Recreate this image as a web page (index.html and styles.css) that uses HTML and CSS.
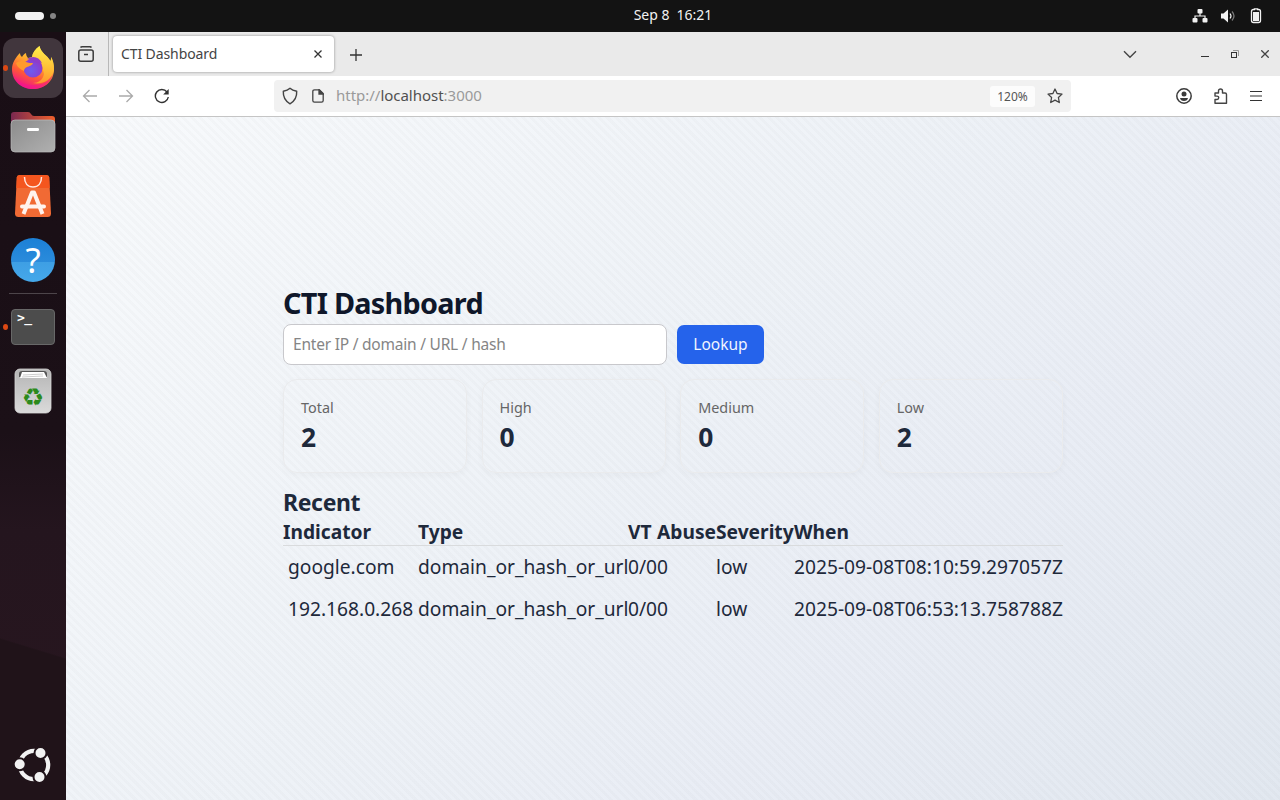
FILE: index.html
```html
<!DOCTYPE html>
<html lang="en">
<head>
<meta charset="utf-8">
<title>CTI Dashboard</title>
<link rel="stylesheet" href="styles.css">
</head>
<body>
<header class="topbar">
  <div class="workspaces"><span class="pill"></span><span class="dot"></span></div>
  <div class="clock"><span>Sep 8</span><span>16:21</span></div>
  <div class="tray">
    <svg width="16" height="16" viewBox="0 0 16 16" fill="#f2f2f2"><rect x="5.500" y="1" width="5" height="4.500" rx="1"/><rect x="0.500" y="10" width="5" height="4.500" rx="1"/><rect x="10.500" y="10" width="5" height="4.500" rx="1"/><path d="M8 5v3M3 10V8h10v2" fill="none" stroke="#f2f2f2" stroke-width="1.200"/></svg>
    <svg width="16" height="16" viewBox="0 0 16 16"><path d="M1 5.500h2.500L8 1.500v13L3.500 10.500H1z" fill="#f2f2f2"/><path d="M10 5.500q2 2.500 0 5" fill="none" stroke="#f2f2f2" stroke-width="1.200"/><path d="M12 3.500q4 4.500 0 9" fill="none" stroke="#777" stroke-width="1.300"/></svg>
    <svg width="16" height="16" viewBox="0 0 16 16"><path d="M5.500 1.500h1V.8h3v.7h1q2 0 2 2v9q0 2-2 2h-5q-2 0-2-2v-9q0-2 2-2z" fill="none" stroke="#f2f2f2" stroke-width="1.300"/><rect x="5" y="4" width="6" height="9" fill="#f2f2f2"/></svg>
  </div>
</header>
<div class="desktop">
  <nav class="dock">
    <div class="tile active running">
      <svg width="44" height="46" viewBox="0 0 44 46">
        <defs>
          <linearGradient id="fx" x1=".8" y1="0" x2=".35" y2="1"><stop offset="0" stop-color="#fff24a"/><stop offset=".4" stop-color="#ffb02e"/><stop offset=".7" stop-color="#ff5a36"/><stop offset="1" stop-color="#f0108c"/></linearGradient>
          <linearGradient id="fy" x1="0" y1="0" x2="0" y2="1"><stop offset="0" stop-color="#fff04d"/><stop offset="1" stop-color="#ffa22a"/></linearGradient>
          <radialGradient id="fp" cx=".4" cy=".65" r=".65"><stop offset="0" stop-color="#6c5cf0"/><stop offset="1" stop-color="#9238c8"/></radialGradient>
        </defs>
        <path d="M9 8C5 12 1 18 1 24c0 12 9 20 21 20s21-8 21-20c0-5-1-9-3-12 0 2 0 3-.5 4C36 10 30 8 28.500 1 24 4 21.500 8 21 12l-4 1c-1-1-2-3-2-5-2 1-3 2-4 4-1-1-2-2-2-4z" fill="url(#fx)"/>
        <path d="M28.500 1C24 4 21.500 8 21 12c5 0 9 3 10 8l2 9c-1 6-6 9-11 9 9 2 19-3 21-13 0-5-1-9-3-13 0 2 0 3-.5 4C36 10 30 8 28.500 1z" fill="url(#fy)" opacity=".85"/>
        <circle cx="22" cy="23" r="9.500" fill="url(#fp)"/>
        <path d="M16 14c6-4 12-2 15 4-3-1-5 0-5 0-2-2-6-3-10-4z" fill="#8f3dc8"/>
        <path d="M5 18c5-3 8-2 10-1 2 1 5 1 7 1-1 3-4 3-6 4-2 1-3 2-3 4-4-2-7-4-8-8z" fill="#ff9a2c"/>
        <path d="M2 29c4 8 11 11 20 11s16-3 20-11c-3 10-11 15-20 15S5 39 2 29z" fill="#f4158c" opacity=".6"/>
      </svg>
    </div>
    <div class="tile">
      <svg width="46" height="42" viewBox="0 0 46 42"><defs><linearGradient id="fo" x1="0" x2="1"><stop offset="0" stop-color="#7a2850"/><stop offset="1" stop-color="#f0602c"/></linearGradient><linearGradient id="fg" x1="0" y1="0" x2="1" y2="1"><stop stop-color="#8c8c8c"/><stop offset="1" stop-color="#b0b0b0"/></linearGradient></defs><path d="M1 12V4q0-3 3-3h14q2 0 3 2t3 2h18q3 0 3 3v6z" fill="url(#fo)"/><rect x="1" y="9" width="44" height="32" rx="4" fill="url(#fg)" stroke="#bbb" stroke-width=".7"/><rect x="17" y="17" width="12" height="3" rx="1.200" fill="#fff"/></svg>
    </div>
    <div class="tile">
      <svg width="36" height="42" viewBox="0 0 36 42"><path d="M4.500 0h27q2.500 0 2.700 2.500L36 38.500q0 3.500-3.500 3.500h-29Q0 42 0 38.500L1.800 2.500Q2 0 4.500 0z" fill="#f16a34"/><path d="M4.500 0h27q2.500 0 2.700 2.500l.5 10.500H1.300l.5-10.500Q2 0 4.500 0z" fill="#f4561f"/><path d="M9.500 2c0 6 3 10 8.500 10s8.500-4 8.500-10" fill="none" stroke="#ffe8df" stroke-width="1.500"/><path d="M8.500 39L17 17.500h2L27.500 39" fill="none" stroke="#fff3ee" stroke-width="4" stroke-linejoin="round"/><path d="M7 31.500h22" stroke="#fff3ee" stroke-width="4" stroke-linecap="round"/></svg>
    </div>
    <div class="tile"><div class="help">?</div></div>
    <div class="divider"></div>
    <div class="tile running"><div class="terminal">&gt;_</div></div>
    <div class="tile">
      <svg width="38" height="46" viewBox="0 0 38 46"><defs><linearGradient id="tr" x1="0" y1="0" x2="0" y2="1"><stop stop-color="#b5b5b5"/><stop offset="1" stop-color="#dadada"/></linearGradient></defs><rect x="1" y="1" width="36" height="44" rx="5" fill="url(#tr)" stroke="#d8d8d8" stroke-width=".8"/><path d="M5 9V6q0-3 3-3h22q3 0 3 3v3" fill="#555"/><path d="M6 10l2-6h22l3 6z" fill="#fff"/><path d="M9 7l20-1M8 9l21-1" stroke="#aaa" stroke-width=".6"/><text x="19" y="38" class="recycle" text-anchor="middle">♻</text></svg>
    </div>
    <div class="tile launcher">
      <svg width="38" height="38" viewBox="0 0 38 38"><circle cx="20" cy="19" r="14.200" fill="none" stroke="#f2f2f2" stroke-width="4.200"/><g fill="#f2f2f2" stroke="#21141a" stroke-width="2"><circle cx="5.700" cy="18.300" r="6"/><circle cx="26.500" cy="7" r="6"/><circle cx="25.500" cy="31" r="6"/></g></svg>
    </div>
  </nav>
  <main class="browser">
    <div class="tabstrip">
      <div class="overview"><svg width="16" height="16" viewBox="0 0 16 16" fill="none" stroke="#3c3c3c" stroke-width="1.500"><path d="M2.500 1.500q.6-.7 1.500-.7h8q.9 0 1.500.7"/><rect x=".8" y="4" width="14.400" height="11.200" rx="2"/><path d="M6 8.500h4"/></svg></div>
      <div class="tab"><span class="tabname">CTI Dashboard</span><svg width="8" height="8" viewBox="0 0 8 8" stroke="#333" stroke-width="1.300"><path d="M.5.500l7 7M7.500.500l-7 7"/></svg></div>
      <svg class="plus" width="14" height="14" viewBox="0 0 14 14" stroke="#333" stroke-width="1.300"><path d="M7 1v12M1 7h12"/></svg>
      <div class="controls">
        <svg width="14" height="9" viewBox="0 0 14 9" fill="none" stroke="#444" stroke-width="1.400"><path d="M1 1.200l6 6 6-6"/></svg>
        <svg class="minimize" width="8" height="10" viewBox="0 0 8 10" stroke="#333"><path d="M0 7.500h8"/></svg>
        <svg class="restore" width="8" height="8" viewBox="0 0 8 8" fill="none"><path d="M2 .5h5.500V6" stroke="#999"/><rect x=".5" y="2.500" width="5" height="5" stroke="#333"/></svg>
        <svg width="8" height="8" viewBox="0 0 8 8" stroke="#444" stroke-width="1.300"><path d="M.3.300l7.400 7.400M7.700.300L.3 7.700"/></svg>
      </div>
    </div>
    <div class="toolbar">
      <div class="navigation">
        <svg width="16" height="16" viewBox="0 0 16 16" fill="none" stroke="#aaa" stroke-width="1.300"><path d="M15 8H1.500M7.500 2l-6 6 6 6"/></svg>
        <svg width="16" height="16" viewBox="0 0 16 16" fill="none" stroke="#aaa" stroke-width="1.300"><path d="M1 8h13.500M8.500 2l6 6-6 6"/></svg>
        <svg width="16" height="16" viewBox="0 0 16 16" fill="none" stroke="#333" stroke-width="1.400"><path d="M13 4A6.500 6.500 0 1 0 14.300 9"/><path d="M14.700 1v5.500H9.200z" fill="#333" stroke="none"/></svg>
      </div>
      <div class="address">
        <svg width="16" height="18" viewBox="0 0 16 18" fill="none" stroke="#444" stroke-width="1.400"><path d="M8 1.200C6 3 4 3.700 1.300 4.300 1 10 3 14 8 16.800c5-2.800 7-6.800 6.700-12.500C12 3.700 10 3 8 1.200z" stroke-linejoin="round"/></svg>
        <svg class="document" width="12" height="14" viewBox="0 0 12 14" fill="none" stroke="#444" stroke-width="1.300"><path d="M7.500.8H2.500Q.8.800.8 2.500v9q0 1.700 1.700 1.700h7q1.700 0 1.700-1.700V4.500z"/><path d="M7 .8v4.200h4.200z" fill="#444"/></svg>
        <div class="url">http://<span>localhost</span>:3000</div>
        <div class="zoom">120%</div>
        <svg width="16" height="16" viewBox="0 0 16 16" fill="none" stroke="#444" stroke-width="1.300" stroke-linejoin="round"><path d="M8 1l2.100 4.500 4.900.6-3.600 3.400.9 5L8 12.100l-4.300 2.400.9-5L1 6.100l4.900-.6z"/></svg>
      </div>
      <div class="actions">
        <svg width="16" height="16" viewBox="0 0 16 16"><circle cx="8" cy="8" r="7.200" fill="none" stroke="#3b3b3b" stroke-width="1.500"/><circle cx="8" cy="6" r="2.500" fill="#3b3b3b"/><path d="M4 10h8q-.5 3-4 3t-4-3z" fill="#3b3b3b"/></svg>
        <svg width="16" height="16" viewBox="0 0 16 16" fill="none" stroke="#444" stroke-width="1.400" stroke-linejoin="round"><path d="M2 5h3.500V3a2 2 0 0 1 4 0v2H12q1.500 0 1.500 1.500v8.800H2v-3.800h2a1.700 1.700 0 0 0 0-3.400H2z"/></svg>
        <svg class="menu" width="14" height="12" viewBox="0 0 14 12" stroke="#333" stroke-width="1.200"><path d="M1 1.500h12M1 6h12M1 10.500h12"/></svg>
      </div>
    </div>
    <section class="page">
      <div class="dashboard">
        <h1>CTI Dashboard</h1>
        <form class="lookup"><input type="text" placeholder="Enter IP / domain / URL / hash"><button type="button">Lookup</button></form>
        <div class="cards">
          <div class="card"><div class="label">Total</div><div class="value">2</div></div>
          <div class="card"><div class="label">High</div><div class="value">0</div></div>
          <div class="card"><div class="label">Medium</div><div class="value">0</div></div>
          <div class="card"><div class="label">Low</div><div class="value">2</div></div>
        </div>
        <h2>Recent</h2>
        <table>
          <colgroup><col class="c-indicator"><col class="c-type"><col class="c-vt"><col class="c-abuse"><col class="c-severity"><col></colgroup>
          <thead><tr><th>Indicator</th><th>Type</th><th>VT</th><th>Abuse</th><th>Severity</th><th>When</th></tr></thead>
          <tbody>
            <tr><td>google.com</td><td>domain_or_hash_or_url</td><td>0/0</td><td>0</td><td>low</td><td>2025-09-08T08:10:59.297057Z</td></tr>
            <tr><td>192.168.0.268</td><td>domain_or_hash_or_url</td><td>0/0</td><td>0</td><td>low</td><td>2025-09-08T06:53:13.758788Z</td></tr>
          </tbody>
        </table>
      </div>
    </section>
  </main>
</div>
</body>
</html>
```
FILE: styles.css
```css
* { box-sizing: border-box; }
body { margin: 0; width: 1280px; height: 800px; overflow: hidden; font-family: "Noto Sans", sans-serif; color: #1e293b; }
svg { display: block; flex: none; }
.topbar { height: 32px; background: #131313; color: #f2f2f2; display: grid; grid-template-columns: 1fr auto 1fr; align-items: center; }
.workspaces { display: flex; align-items: center; gap: 6px; padding-left: 15px; }
.pill { width: 29px; height: 8px; border-radius: 4px; background: #f2f2f2; }
.dot { width: 6px; height: 6px; border-radius: 50%; background: #858585; }
.clock { display: flex; gap: 7px; font-size: 14px; line-height: 30px; height: 32px; padding-left: 66px; }
.tray { display: flex; justify-content: flex-end; gap: 12px; padding-right: 16px; }
.desktop { display: flex; height: 768px; }
.dock { width: 66px; flex: none; padding: 6px 3px 5px; display: flex; flex-direction: column; gap: 4px; background: linear-gradient(197deg, transparent 79.4%, #201319 79.6%), linear-gradient(180deg, #190e15 0%, #1b1017 52%, #24151e 65%, #27161f 85%); }
.tile { width: 60px; height: 60px; flex: none; display: flex; align-items: center; justify-content: center; position: relative; }
.active { background: #41363d; border-radius: 12px; }
.running::before { content: ""; position: absolute; left: 0; top: 27px; width: 5px; height: 6px; border-radius: 50%; background: #dd4814; }
.help { width: 44px; height: 44px; border-radius: 50%; background: linear-gradient(#1c80d6 0, #2a8bdb 54%, #3e9fe4 55%, #45a8ea); color: #fff; font-size: 35px; line-height: 43px; text-align: center; }
.divider { width: 48px; height: 1px; margin: -1px 6px; background: #4d454a; }
.terminal { width: 44px; height: 36px; border: 1px solid #686868; border-radius: 4px; background: #4c4c4c; color: #fff; font: bold 13px/16px "DejaVu Sans Mono", monospace; padding: 0 0 0 5px; letter-spacing: -.5px; }
.recycle { font: 25px "DejaVu Sans", sans-serif; fill: #2c8a1b; }
.launcher { margin-top: auto; }
.browser { flex: 1; min-width: 0; display: flex; flex-direction: column; }
.tabstrip { height: 44px; background: #eaeaea; display: flex; align-items: center; }
.overview { width: 43px; height: 44px; display: flex; align-items: center; padding-left: 12px; border-right: 1px solid #b8b8b8; }
.tab { width: 221px; height: 36px; margin-left: 4px; display: flex; align-items: center; justify-content: space-between; padding: 0 12px 0 8px; border-radius: 4px; background: #fff; box-shadow: 0 0 3px #0006; font-size: 14px; color: #444; }
.tabname { letter-spacing: -.1px; line-height: 34px; padding-bottom: 1px; }
.plus { margin: 2px 0 0 15px; }
.controls { margin-left: auto; display: flex; align-items: center; padding-right: 11px; }
.minimize { margin-left: 64px; margin-right: 22px; }
.restore { margin-right: 22px; }
.toolbar { height: 41px; background: #fff; border-bottom: 1px solid #c5c5c5; display: flex; align-items: center; }
.navigation { display: flex; gap: 20px; padding-left: 16px; width: 208px; }
.address { width: 797px; height: 32px; border-radius: 4px; background: #f1f1f1; display: flex; align-items: center; padding: 0 8px; }
.document { margin: 0 12px 0 14px; }
.url { flex: 1; color: #9a9a9a; font-size: 15px; letter-spacing: -.02px; line-height: 30px; padding-bottom: 2px; }
.url span { color: #505050; }
.zoom { width: 45px; height: 21px; border-radius: 3px; background: #fcfcfc; text-align: center; font-size: 12px; line-height: 21px; color: #555; margin-right: 12px; }
.actions { margin-left: auto; display: flex; align-items: center; gap: 21px; padding-right: 17px; }
.menu { margin-left: -1px; }
.page { flex: 1; display: flex; padding: 166px 217px 0; background: repeating-linear-gradient(45deg, rgba(0,0,0,.015) 0 3px, transparent 3px 6px), linear-gradient(135deg, #f8fafc 0%, #eef2f7 45%, #e9edf5 70%, #e2e8f0 100%); }
.dashboard { width: 780px; }
h1 { margin: 0 0 1px; font-size: 28.800px; line-height: 40px; letter-spacing: -.72px; color: #0f172a; }
.lookup { display: flex; align-items: center; gap: 10px; margin: 0; }
.lookup input { width: 384px; height: 41px; border: 1px solid #c8c8cc; border-radius: 8px; padding: 0 9px 2px; background: #fff; font: 15.500px "Noto Sans", sans-serif; letter-spacing: -.22px; }
.lookup input::placeholder { color: #858585; }
.lookup button { width: 87px; height: 39px; border: 0; border-radius: 7px; padding: 0 0 2px; background: #2563eb; color: #f1f5ff; font: 15.500px "Noto Sans", sans-serif; }
.cards { display: grid; grid-template-columns: repeat(4, 1fr); gap: 14.400px; margin-top: 14px; }
.card { height: 94px; border: 1px solid #eaebed; border-radius: 14px; padding: 16px 17px; box-shadow: 0 2px 7px rgba(0,0,0,.035); }
.label { font-size: 14.400px; line-height: 23px; color: #666; }
.value { font-size: 26.400px; font-weight: 700; line-height: 36px; }
h2 { margin: 13px 0 1px; font-size: 23px; line-height: 32px; letter-spacing: -.35px; }
table { width: 780px; table-layout: fixed; border-collapse: collapse; font-size: 19.200px; white-space: nowrap; }
th, td { padding: 0; text-align: left; }
th { height: 26px; line-height: 25px; border-bottom: 1px solid #d9dbdd; }
td { height: 42px; line-height: 42px; }
td:first-child { padding-left: 5px; }
.c-indicator { width: 135px; }
.c-type { width: 210px; }
.c-vt { width: 29px; }
.c-abuse { width: 59px; }
.c-severity { width: 78px; }
```
